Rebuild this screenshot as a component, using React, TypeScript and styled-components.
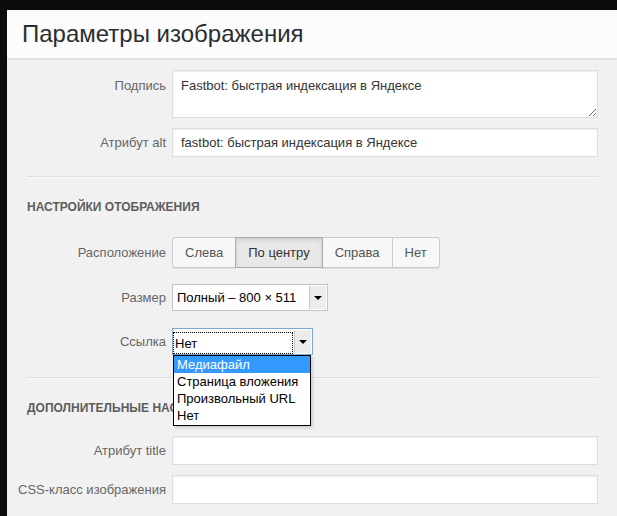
import React from "react";
import styled, { createGlobalStyle, css } from "styled-components";

const Global = createGlobalStyle`
  html, body { margin: 0; padding: 0; background: #0c0c0c; }
  body { font-family: "Liberation Sans", Arial, sans-serif; }
  * { box-sizing: border-box; }
`;

const Frame = styled.div`
  padding: 10px 0 0 7px;
  height: 516px;
  overflow: hidden;
`;

const Panel = styled.div`
  background: #f1f1f1;
  height: 100%;
`;

const Header = styled.div`
  height: 48px;
  background: #fcfcfc;
  box-shadow: 0 1px 2px rgba(0, 0, 0, 0.12);
  display: flex;
  align-items: center;
  padding-left: 15px;
  position: relative;
`;

const Title = styled.h1`
  margin: 0;
  font-size: 24px;
  font-weight: 400;
  color: #2a2e32;
  margin-top: 0;
`;

const Body = styled.div`
  padding: 12px 19px 0 20px;
  display: flex;
  flex-direction: column;
`;

const Row = styled.div<{ $mt?: number; $align?: string }>`
  display: grid;
  grid-template-columns: 139px 1fr;
  column-gap: 6px;
  align-items: ${(p) => p.$align || "center"};
  margin-top: ${(p) => p.$mt ?? 0}px;
`;

const Label = styled.label<{ $pt?: number }>`
  text-align: right;
  font-size: 13px;
  color: #666;
  white-space: nowrap;
  direction: rtl;
  padding-top: ${(p) => p.$pt ?? 0}px;
`;

const fieldBase = css`
  font-family: "Liberation Sans", Arial, sans-serif;
  font-size: 13px;
  color: #333;
  background: #fff;
  border: 1px solid #ddd;
  box-shadow: inset 0 1px 2px rgba(0, 0, 0, 0.07);
  padding: 0 8px;
  outline: none;
  width: 100%;
  margin: 0;
`;

const TextArea = styled.textarea`
  ${fieldBase}
  height: 48px;
  padding-top: 7px;
  line-height: 16px;
  resize: vertical;
  display: block;
`;

const Input = styled.input<{ $h?: number }>`
  ${fieldBase}
  height: ${(p) => p.$h ?? 29}px;
  display: block;
`;

const Separator = styled.hr<{ $mt: number }>`
  border: 0;
  border-top: 1px solid #ddd;
  border-bottom: 1px solid #fafafa;
  margin: ${(p) => p.$mt}px 0 0 0;
  height: 0;
`;

const SectionTitle = styled.h3<{ $mt: number }>`
  margin: ${(p) => p.$mt}px 0 0 0;
  font-size: 12px;
  font-weight: 700;
  color: #5d5d5d;
  text-transform: uppercase;
  line-height: 16px;
`;

const ButtonGroup = styled.div`
  display: flex;
`;

const GroupButton = styled.button<{ $pressed?: boolean; $first?: boolean; $last?: boolean }>`
  font-family: "Liberation Sans", Arial, sans-serif;
  font-size: 13px;
  color: #555;
  height: 31px;
  padding: 0 12px;
  background: #f7f7f7;
  border: 1px solid #ccc;
  margin-left: -1px;
  box-shadow: 0 1px 0 #ddd;
  border-radius: ${(p) => (p.$first ? "3px 0 0 3px" : p.$last ? "0 3px 3px 0" : "0")};
  ${(p) => p.$first && "margin-left: 0;"}
  ${(p) =>
    p.$pressed &&
    css`
      background: #e8e8e8;
      border-color: #aaa;
      box-shadow: inset 0 2px 4px rgba(0, 0, 0, 0.12);
      position: relative;
      z-index: 1;
      color: #333;
    `}
`;

const SelectBox = styled.div<{ $w: number; $focus?: boolean }>`
  position: relative;
  width: ${(p) => p.$w}px;
  height: 27px;
  background: #fff;
  border: 1px solid ${(p) => (p.$focus ? "#7ea6cf" : "#c4c4c4")};
  display: flex;
  align-items: stretch;
  font-family: "Liberation Sans", Arial, sans-serif;
  font-size: 13px;
  color: #000;
`;

const SelectValue = styled.div<{ $focus?: boolean }>`
  flex: 1;
  display: flex;
  align-items: center;
  padding-left: 3px;
  margin: 2px 1px 2px 1px;
  ${(p) =>
    p.$focus &&
    css`
      border: 1px dotted #000;
      padding-left: 1px;
      margin: 3px 1px 0 0;
    `}
`;

const Arrow = styled.div`
  width: 17px;
  background: #ececec;
  border-left: 1px solid #c9c9c9;
  display: flex;
  align-items: center;
  justify-content: center;
  margin: 1px 1px 1px 0;
`;

const Triangle = styled.span`
  width: 0;
  height: 0;
  border-left: 4px solid transparent;
  border-right: 4px solid transparent;
  border-top: 4px solid #000;
  margin-top: 1px;
`;

const DropList = styled.ul`
  position: absolute;
  left: 0;
  top: 26px;
  width: 138px;
  margin: 0;
  padding: 0 0 1px 0;
  list-style: none;
  background: #fff;
  border: 1px solid #000;
  z-index: 10;
  box-shadow: 2px 2px 3px rgba(0, 0, 0, 0.15);
`;

const Option = styled.li<{ $sel?: boolean }>`
  height: 17px;
  line-height: 17px;
  padding-left: 3px;
  font-size: 13px;
  color: ${(p) => (p.$sel ? "#fff" : "#000")};
  background: ${(p) => (p.$sel ? "#3399ff" : "transparent")};
  white-space: nowrap;
`;

const Select: React.FC<{ value: string; width: number; focus?: boolean; options?: string[]; selected?: number }> = ({
  value,
  width,
  focus,
  options,
  selected,
}) => (
  <SelectBox $w={width} $focus={focus}>
    <SelectValue $focus={focus}>{value}</SelectValue>
    <Arrow>
      <Triangle />
    </Arrow>
    {options && (
      <DropList>
        {options.map((o, i) => (
          <Option key={o} $sel={i === selected}>
            {o}
          </Option>
        ))}
      </DropList>
    )}
  </SelectBox>
);

export default function App() {
  return (
    <>
      <Global />
      <Frame>
        <Panel>
          <Header>
            <Title>Параметры изображения</Title>
          </Header>
          <Body>
            <Row $align="start">
              <Label $pt={8}>Подпись</Label>
              <TextArea defaultValue="Fastbot: быстрая индексация в Яндексе" />
            </Row>
            <Row $mt={10}>
              <Label>Атрибут alt</Label>
              <Input defaultValue="fastbot: быстрая индексация в Яндексе" />
            </Row>
            <Separator $mt={19} />
            <SectionTitle $mt={21}>Настройки отображения</SectionTitle>
            <Row $mt={22}>
              <Label>Расположение</Label>
              <ButtonGroup>
                <GroupButton $first>Слева</GroupButton>
                <GroupButton $pressed>По центру</GroupButton>
                <GroupButton>Справа</GroupButton>
                <GroupButton $last>Нет</GroupButton>
              </ButtonGroup>
            </Row>
            <Row $mt={16}>
              <Label>Размер</Label>
              <Select value="Полный – 800 × 511" width={156} />
            </Row>
            <Row $mt={17}>
              <Label>Ссылка</Label>
              <Select
                value="Нет"
                width={141}
                focus
                options={["Медиафайл", "Страница вложения", "Произвольный URL", "Нет"]}
                selected={0}
              />
            </Row>
            <Separator $mt={22} />
            <SectionTitle $mt={21}>Дополнительные настройки</SectionTitle>
            <Row $mt={20}>
              <Label>Атрибут title</Label>
              <Input $h={29} />
            </Row>
            <Row $mt={10}>
              <Label>CSS-класс изображения</Label>
              <Input $h={29} />
            </Row>
          </Body>
        </Panel>
      </Frame>
    </>
  );
}
